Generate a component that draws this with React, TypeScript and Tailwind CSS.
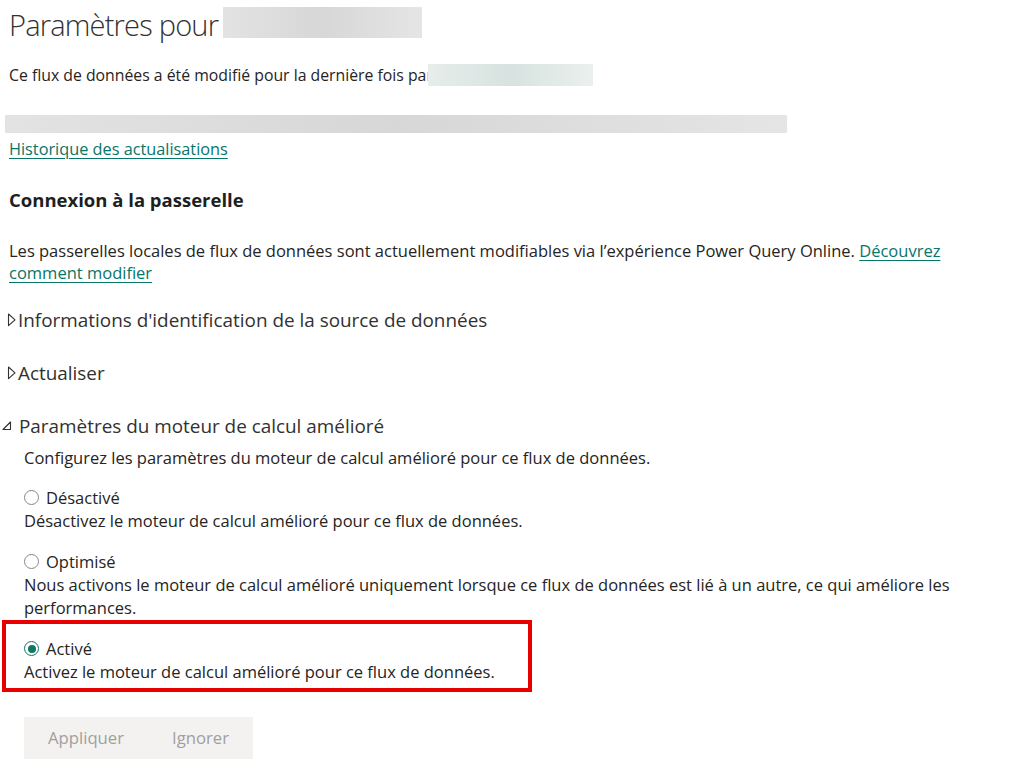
import React from 'react';

const font = { fontFamily: '"Open Sans", "Noto Sans", sans-serif' };

// grey placeholder for the blurred-out parts of the screenshot
const Blur: React.FC<{ className: string }> = ({ className }) => (
  <div className={`bg-gradient-to-r from-[#e3e3e3] via-[#d7d7d7] to-[#e5e5e5] ${className}`} />
);

const TriRight = () => (
  <svg width="11" height="14" viewBox="0 0 11 14" className="shrink-0">
    <path d="M1.5 1 L8 6.8 L1.5 12.6 Z" fill="none" stroke="#323130" strokeWidth="1.1" strokeLinejoin="round" />
  </svg>
);

const TriDown = () => (
  <svg width="19" height="10" viewBox="0 0 19 10" className="shrink-0">
    <path d="M10.5 1 L10.5 8.5 L3 8.5 Z" fill="none" stroke="#323130" strokeWidth="1.1" strokeLinejoin="round" />
  </svg>
);

const Radio: React.FC<{ checked?: boolean }> = ({ checked }) =>
  checked ? (
    <span className="w-[15px] h-[15px] rounded-full border-[1.5px] border-[#117865] flex items-center justify-center shrink-0">
      <span className="w-[8px] h-[8px] rounded-full bg-[#117865]" />
    </span>
  ) : (
    <span className="w-[15px] h-[15px] rounded-full border border-[#8a8886] shrink-0" />
  );

const Option: React.FC<{ label: string; desc: string; checked?: boolean }> = ({ label, desc, checked }) => (
  <div className="text-[16.5px] leading-[23px] text-[#252423]">
    <div className="flex items-center gap-[7px]">
      <Radio checked={checked} />
      <span>{label}</span>
    </div>
    <div>{desc}</div>
  </div>
);

const Expander: React.FC<{ label: string; open?: boolean }> = ({ label, open }) => (
  <div className={`flex items-center h-[26px] ${open ? 'pl-0' : 'pl-[7px]'}`}>
    {open ? <TriDown /> : <TriRight />}
    <span>{label}</span>
  </div>
);

export default function App() {
  return (
    <div className="w-[1020px] h-[781px] bg-white overflow-hidden text-[#252423]" style={font}>
      <div className="pl-[9px] pt-[7px] flex items-start">
        <span className="text-[29px] font-light leading-[36px] tracking-[-0.8px] text-[#323130]">Paramètres pour</span>
        <Blur className="ml-[5px] w-[199px] h-[31px]" />
      </div>
      <div className="pl-[9px] mt-[21px] flex items-center h-[22px]">
        <span className="text-[15.8px] leading-[22px]">Ce flux de données a été modifié pour la dernière fois par</span>
        <Blur className="relative -ml-[5px] w-[165px] h-[22px] from-[#e6edeb] via-[#d7e3e0] to-[#eaf0ee]" />
      </div>
      <Blur className="ml-[5px] mt-[29px] w-[782px] h-[18px]" />
      <div className="pl-[9px]">
        <div className="mt-[5px] leading-[22px]">
          <a className="text-[16.3px] text-[#077568] underline underline-offset-[3px]">Historique des actualisations</a>
        </div>
        <div className="mt-[28px] text-[18.5px] font-bold leading-[24px] text-[#201f1e]">Connexion à la passerelle</div>
        <p className="mt-[28px] text-[16.5px] leading-[22px] w-[990px]">
          Les passerelles locales de flux de données sont actuellement modifiables via l’expérience Power Query Online.{' '}
          <a className="text-[#077568] underline underline-offset-[3px]">Découvrez comment modifier</a>
        </p>
      </div>
      <div className="mt-[23px] flex flex-col gap-[27px] text-[18.9px] text-[#323130]">
        <Expander label="Informations d'identification de la source de données" />
        <Expander label="Actualiser" />
        <Expander open label="Paramètres du moteur de calcul amélioré" />
      </div>
      <div className="pl-[24px] mt-[8px]">
        <div className="text-[16.5px] leading-[22px]">
          Configurez les paramètres du moteur de calcul amélioré pour ce flux de données.
        </div>
        <div className="mt-[17px]">
          <Option label="Désactivé" desc="Désactivez le moteur de calcul amélioré pour ce flux de données." />
        </div>
        <div className="mt-[18px]">
          <Option
            label="Optimisé"
            desc="Nous activons le moteur de calcul amélioré uniquement lorsque ce flux de données est lié à un autre, ce qui améliore les performances."
          />
        </div>
      </div>
      <div className="ml-[2px] mt-[1px] w-[530px] border-[4px] border-[#e80000] pl-[18px] pt-[13px] pb-[5px]">
        <Option checked label="Activé" desc="Activez le moteur de calcul amélioré pour ce flux de données." />
      </div>
      <div className="ml-[24px] mt-[25px] w-[229px] h-[42px] bg-[#f3f2f1] flex items-center text-[16.7px] text-[#a19f9d]">
        <span className="ml-[24px]">Appliquer</span>
        <span className="ml-[48px]">Ignorer</span>
      </div>
    </div>
  );
}
